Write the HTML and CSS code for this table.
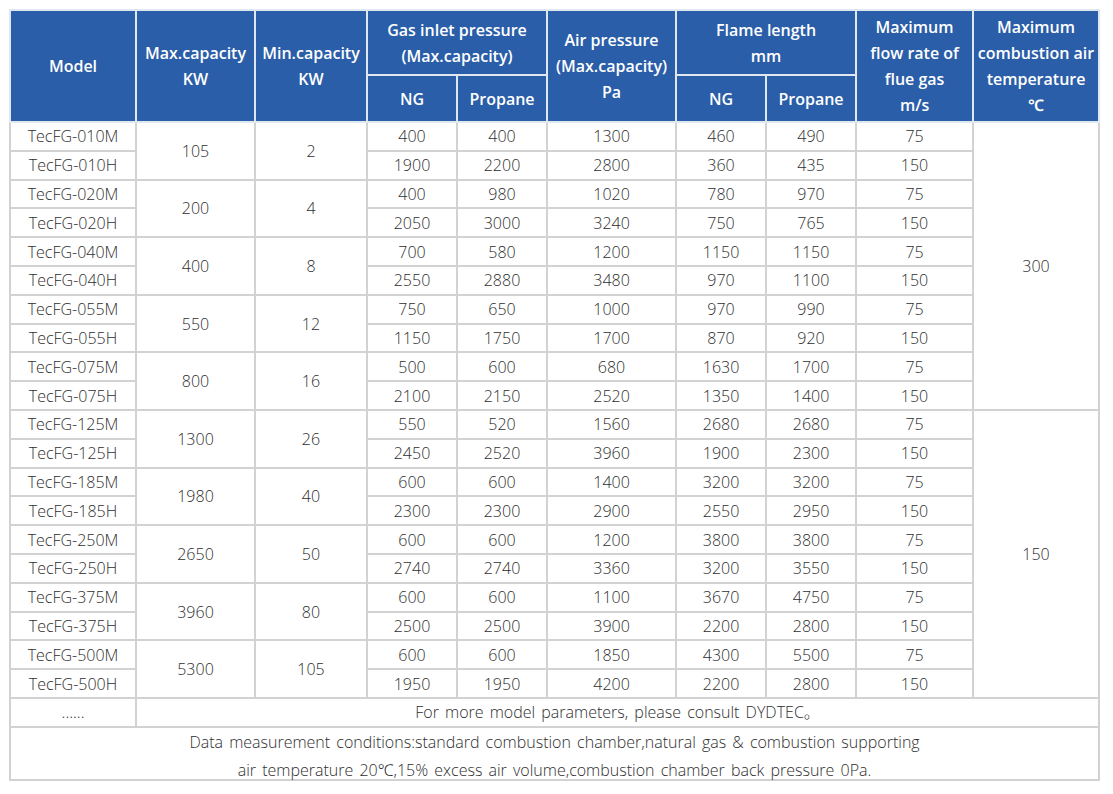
FILE: index.html
```html
<!DOCTYPE html>
<html>
<head>
<meta charset="utf-8">
<link rel="stylesheet" href="styles.css">
</head>
<body>
<table class="spec">
  <colgroup>
    <col class="c-model"><col class="c-max"><col class="c-min"><col class="c-ng"><col class="c-ng"><col class="c-air"><col class="c-ng"><col class="c-ng"><col class="c-flow"><col class="c-temp">
  </colgroup>
  <thead>
    <tr class="h1">
      <th rowspan="2">Model</th>
      <th rowspan="2">Max.capacity<br>KW</th>
      <th rowspan="2">Min.capacity<br>KW</th>
      <th colspan="2">Gas inlet pressure<br>(Max.capacity)</th>
      <th rowspan="2">Air pressure<br>(Max.capacity)<br>Pa</th>
      <th colspan="2">Flame length<br>mm</th>
      <th rowspan="2">Maximum<br>flow rate of<br>flue gas<br>m/s</th>
      <th rowspan="2">Maximum<br>combustion air<br>temperature<br>℃</th>
    </tr>
    <tr class="h2">
      <th>NG</th><th>Propane</th><th>NG</th><th>Propane</th>
    </tr>
  </thead>
  <tbody>
    <tr><td>TecFG-010M</td><td rowspan="2">105</td><td rowspan="2">2</td><td>400</td><td>400</td><td>1300</td><td>460</td><td>490</td><td>75</td><td rowspan="10">300</td></tr>
    <tr><td>TecFG-010H</td><td>1900</td><td>2200</td><td>2800</td><td>360</td><td>435</td><td>150</td></tr>
    <tr><td>TecFG-020M</td><td rowspan="2">200</td><td rowspan="2">4</td><td>400</td><td>980</td><td>1020</td><td>780</td><td>970</td><td>75</td></tr>
    <tr><td>TecFG-020H</td><td>2050</td><td>3000</td><td>3240</td><td>750</td><td>765</td><td>150</td></tr>
    <tr><td>TecFG-040M</td><td rowspan="2">400</td><td rowspan="2">8</td><td>700</td><td>580</td><td>1200</td><td>1150</td><td>1150</td><td>75</td></tr>
    <tr><td>TecFG-040H</td><td>2550</td><td>2880</td><td>3480</td><td>970</td><td>1100</td><td>150</td></tr>
    <tr><td>TecFG-055M</td><td rowspan="2">550</td><td rowspan="2">12</td><td>750</td><td>650</td><td>1000</td><td>970</td><td>990</td><td>75</td></tr>
    <tr><td>TecFG-055H</td><td>1150</td><td>1750</td><td>1700</td><td>870</td><td>920</td><td>150</td></tr>
    <tr><td>TecFG-075M</td><td rowspan="2">800</td><td rowspan="2">16</td><td>500</td><td>600</td><td>680</td><td>1630</td><td>1700</td><td>75</td></tr>
    <tr><td>TecFG-075H</td><td>2100</td><td>2150</td><td>2520</td><td>1350</td><td>1400</td><td>150</td></tr>
    <tr><td>TecFG-125M</td><td rowspan="2">1300</td><td rowspan="2">26</td><td>550</td><td>520</td><td>1560</td><td>2680</td><td>2680</td><td>75</td><td rowspan="10">150</td></tr>
    <tr><td>TecFG-125H</td><td>2450</td><td>2520</td><td>3960</td><td>1900</td><td>2300</td><td>150</td></tr>
    <tr><td>TecFG-185M</td><td rowspan="2">1980</td><td rowspan="2">40</td><td>600</td><td>600</td><td>1400</td><td>3200</td><td>3200</td><td>75</td></tr>
    <tr><td>TecFG-185H</td><td>2300</td><td>2300</td><td>2900</td><td>2550</td><td>2950</td><td>150</td></tr>
    <tr><td>TecFG-250M</td><td rowspan="2">2650</td><td rowspan="2">50</td><td>600</td><td>600</td><td>1200</td><td>3800</td><td>3800</td><td>75</td></tr>
    <tr><td>TecFG-250H</td><td>2740</td><td>2740</td><td>3360</td><td>3200</td><td>3550</td><td>150</td></tr>
    <tr><td>TecFG-375M</td><td rowspan="2">3960</td><td rowspan="2">80</td><td>600</td><td>600</td><td>1100</td><td>3670</td><td>4750</td><td>75</td></tr>
    <tr><td>TecFG-375H</td><td>2500</td><td>2500</td><td>3900</td><td>2200</td><td>2800</td><td>150</td></tr>
    <tr><td>TecFG-500M</td><td rowspan="2">5300</td><td rowspan="2">105</td><td>600</td><td>600</td><td>1850</td><td>4300</td><td>5500</td><td>75</td></tr>
    <tr><td>TecFG-500H</td><td>1950</td><td>1950</td><td>4200</td><td>2200</td><td>2800</td><td>150</td></tr>
    <tr class="more"><td class="dots">......</td><td colspan="9" class="sentence">For more model parameters, please consult DYDTEC。</td></tr>
    <tr class="note"><td colspan="10" class="sentence"><div class="note-text">Data measurement conditions:standard combustion chamber,natural gas &amp; combustion supporting<br>air temperature 20℃,15% excess air volume,combustion chamber back pressure 0Pa.</div></td></tr>
  </tbody>
</table>
</body>
</html>
```
FILE: styles.css
```css
html, body {
  margin: 0;
  padding: 0;
  background: #ffffff;
}

body {
  font-family: "Open Sans", "Noto Sans", "Noto Sans CJK SC", sans-serif;
}

.spec {
  margin: 9px 0 0 9px;
  width: 1089px;
  table-layout: fixed;
  border-collapse: collapse;
}

.c-model { width: 126px; }
.c-max { width: 119px; }
.c-min { width: 112px; }
.c-ng { width: 90px; }
.c-air { width: 129px; }
.c-flow { width: 117px; }
.c-temp { width: 126px; }

.spec th {
  background: #2a5ea8;
  color: #ffffff;
  font-weight: 600;
  font-size: 16px;
  line-height: 26px;
  padding: 0;
  text-align: center;
  vertical-align: middle;
  border: 2px solid #dfe7f1;
}

.h1 { height: 65px; }
.h2 { height: 47px; }

.spec tbody tr { height: 28.8px; }

.spec td {
  font-size: 16px;
  font-weight: 300;
  color: #2e2e2e;
  line-height: 20px;
  padding: 0;
  text-align: center;
  vertical-align: middle;
  border: 2px solid #d2d2d2;
}

.spec td.sentence {
  word-spacing: 2px;
}

.spec tbody tr.more { height: 29px; }

.dots {
  font-size: 11px;
  color: #777777;
}

.spec tbody tr.note { height: 51px; }

.note td {
  vertical-align: top;
}

.note-text {
  line-height: 28px;
  margin-bottom: -5px;
}
```
